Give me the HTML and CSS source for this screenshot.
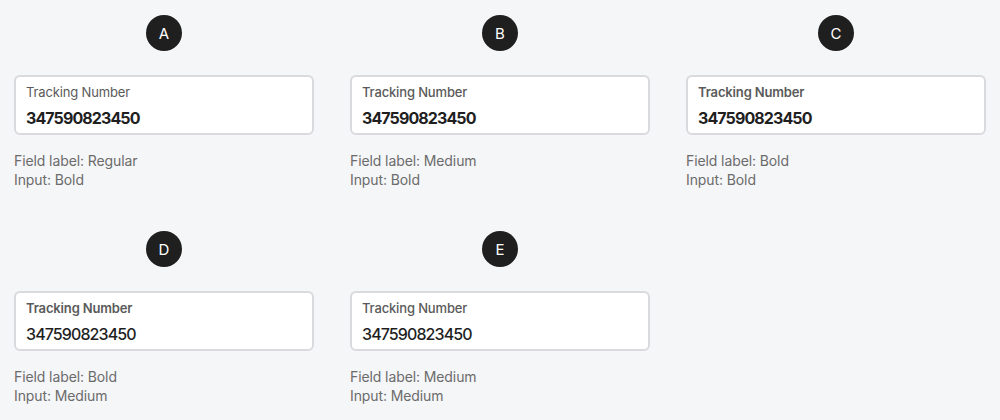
FILE: index.html
```html
<!DOCTYPE html>
<html>
<head>
<meta charset="utf-8">
<link rel="stylesheet" href="styles.css">
</head>
<body>
<div class="grid">
  <div class="cell">
    <div class="badge">A</div>
    <div class="field">
      <div class="label lw-regular">Tracking Number</div>
      <div class="value vw-bold">347590823450</div>
    </div>
    <div class="desc">Field label: Regular<br>Input: Bold</div>
  </div>
  <div class="cell">
    <div class="badge">B</div>
    <div class="field">
      <div class="label lw-medium">Tracking Number</div>
      <div class="value vw-bold">347590823450</div>
    </div>
    <div class="desc">Field label: Medium<br>Input: Bold</div>
  </div>
  <div class="cell">
    <div class="badge">C</div>
    <div class="field">
      <div class="label lw-bold">Tracking Number</div>
      <div class="value vw-bold">347590823450</div>
    </div>
    <div class="desc">Field label: Bold<br>Input: Bold</div>
  </div>
  <div class="cell">
    <div class="badge">D</div>
    <div class="field">
      <div class="label lw-bold">Tracking Number</div>
      <div class="value vw-medium">347590823450</div>
    </div>
    <div class="desc">Field label: Bold<br>Input: Medium</div>
  </div>
  <div class="cell">
    <div class="badge">E</div>
    <div class="field">
      <div class="label lw-medium">Tracking Number</div>
      <div class="value vw-medium">347590823450</div>
    </div>
    <div class="desc">Field label: Medium<br>Input: Medium</div>
  </div>
</div>
</body>
</html>
```
FILE: styles.css
```css
html, body {
  margin: 0;
  padding: 0;
  background: #f5f6f8;
  font-family: Inter, "Noto Sans", sans-serif;
}
.grid {
  display: grid;
  grid-template-columns: repeat(3, 300px);
  column-gap: 36px;
  row-gap: 26px;
  padding: 15px 0 0 14px;
}
.cell {
  display: flex;
  flex-direction: column;
  height: 190px;
}
.badge {
  align-self: center;
  width: 36px;
  height: 36px;
  border-radius: 50%;
  background: #1f1f1f;
  color: #ffffff;
  font-size: 15px;
  font-weight: 400;
  display: flex;
  align-items: center;
  justify-content: center;
  margin-bottom: 24px;
}
.field {
  box-sizing: border-box;
  height: 60px;
  background: #ffffff;
  border: 2px solid #d9d9de;
  border-radius: 6px;
  padding: 6px 10px 0 10px;
}
.label {
  font-size: 13px;
  line-height: 18px;
  color: #5a5a5a;
  letter-spacing: -0.15px;
}
.lw-regular { font-weight: 400; }
.lw-medium { font-weight: 500; }
.lw-bold { font-weight: 600; }
.value {
  margin-top: 7px;
  font-size: 16px;
  line-height: 20px;
  color: #1f1f1f;
  letter-spacing: -0.9px;
}
.vw-bold { font-weight: 700; }
.vw-medium { font-weight: 500; }
.desc {
  margin-top: 17px;
  font-size: 14px;
  line-height: 18.5px;
  color: #6b6b6b;
  letter-spacing: -0.1px;
}
```
